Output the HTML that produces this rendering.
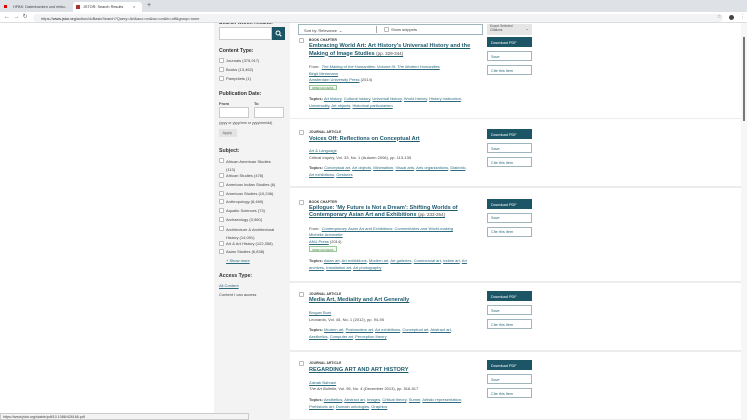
<!DOCTYPE html><html><head><meta charset="utf-8"><style>
*{margin:0;padding:0;box-sizing:border-box}
body{width:747px;height:420px;overflow:hidden;background:#fff;font-family:"Liberation Sans",sans-serif;position:relative;color:#333}
.a{position:absolute;white-space:nowrap}
.z{z-index:10}
.s{font-size:4px;color:#444}
.l{color:#2c6b7f;text-decoration:underline}
.t{font-size:5.6px;font-weight:bold;color:#1d5a6c;text-decoration:underline}
.lab{font-size:3.3px;font-weight:bold;color:#333;letter-spacing:.1px}
.h{font-size:5.2px;font-weight:bold;color:#333}
.cb{position:absolute;width:5px;height:5px;border:0.6px solid #bbb;background:#fff;border-radius:1px}
.btn{position:absolute;width:45px;height:10px;border:0.7px solid #9fb5bd;background:#fff;font-size:3.8px;color:#2c6b7f;padding:2.8px 0 0 3px}
.dl{background:#1c5566;color:#fff;border-color:#1c5566}
.sep{position:absolute;left:290px;width:451px;height:1.5px;background:#ececec}
.oa{position:absolute;height:5.5px;border:0.5px solid #9bc59b;background:#f3faf1;font-size:3px;color:#3c7a3c;padding:0.8px 2px 0}
</style></head><body>
<!-- chrome -->
<div class="a z" style="left:0;top:0;width:747px;height:12px;background:#dee1e6"></div>
<div class="a z" style="left:3px;top:2px;width:69px;height:10px;font-size:3.8px;color:#444;padding:3px 0 0 10px">HFBK: Datenbanken und elek…<span style="position:absolute;left:60px">×</span></div>
<div class="a z" style="left:4px;top:5px;width:3px;height:3px;background:#d00"></div>
<div class="a z" style="left:73px;top:2px;width:69px;height:10px;background:#fff;border-radius:3px 3px 0 0;font-size:3.8px;color:#333;padding:3px 0 0 10px">JSTOR: Search Results<span style="position:absolute;left:60px">×</span></div>
<div class="a z" style="left:76px;top:4.5px;width:4px;height:4px;background:#a33"></div>
<div class="a z" style="left:147px;top:2px;font-size:7px;color:#555">+</div>
<div class="a z" style="left:0;top:12px;width:747px;height:11px;background:#fff;border-bottom:0.5px solid #ddd"></div>
<div class="a z" style="left:4px;top:13px;font-size:6px;color:#666">←&nbsp;&nbsp;→&nbsp;&nbsp;↻</div>
<div class="a z" style="left:33px;top:13.5px;width:690px;height:8px;background:#f1f3f4;border-radius:4px;font-size:3.9px;color:#444;padding:2px 0 0 8px">https://<b style="font-weight:normal;color:#222">www.jstor.org</b>/action/doBasicSearch?Query=Art&amp;acc=on&amp;wc=on&amp;fc=off&amp;group=none</div>
<div class="a z" style="left:717px;top:14px;font-size:5px;color:#666">☆</div>
<div class="a z" style="left:729px;top:15px;width:5px;height:5px;border-radius:50%;background:#444"></div>
<div class="a z" style="left:740px;top:14px;font-size:5px;color:#666">⋮</div>
<!-- scrollbar -->
<div class="a" style="left:741px;top:23px;width:6px;height:397px;background:#f6f6f6"></div>
<div class="a" style="left:743px;top:37px;width:2px;height:84px;background:#777"></div>
<!-- sidebar -->
<div class="a" style="left:214px;top:23px;width:76px;height:397px;background:#f3f3f3"></div>
<div class="a h" style="left:219px;top:20px">Search within results:</div>
<div class="a" style="left:219px;top:27px;width:53px;height:13px;background:#fff;border:0.6px solid #ccc"></div>
<div class="a" style="left:272px;top:27px;width:13px;height:13px;background:#1c5566"></div>
<svg class="a" style="left:275px;top:30px" width="7" height="7" viewBox="0 0 7 7"><circle cx="3" cy="3" r="2" fill="none" stroke="#fff" stroke-width="1"/><path d="M4.4 4.4L6.3 6.3" stroke="#fff" stroke-width="1.1"/></svg>
<div class="a h" style="left:219px;top:48px">Content Type:</div>
<div class="cb" style="left:219px;top:58px"></div><div class="a s" style="left:226px;top:58px">Journals (375,917)</div>
<div class="cb" style="left:219px;top:67px"></div><div class="a s" style="left:226px;top:67px">Books (13,462)</div>
<div class="cb" style="left:219px;top:76px"></div><div class="a s" style="left:226px;top:76px">Pamphlets (1)</div>
<div class="a h" style="left:219px;top:91px">Publication Date:</div>
<div class="a s" style="left:219px;top:101px;font-weight:bold">From</div><div class="a s" style="left:254px;top:101px;font-weight:bold">To</div>
<div class="a" style="left:219px;top:107px;width:30px;height:11px;background:#fff;border:0.6px solid #ccc"></div>
<div class="a" style="left:254px;top:107px;width:30px;height:11px;background:#fff;border:0.6px solid #ccc"></div>
<div class="a s" style="left:219px;top:121px;font-size:3.6px">(yyyy or yyyy/mm or yyyy/mm/dd)</div>
<div class="a" style="left:219px;top:129px;width:18px;height:8px;background:#e3e3e3;font-size:3.8px;color:#666;padding:2px 0 0 3.5px">Apply</div>
<div class="a h" style="left:219px;top:148px">Subject:</div>
<div class="cb" style="left:219px;top:158px"></div><div class="a s" style="left:226px;top:158px;line-height:7.5px">African American Studies<br>(113)</div>
<div class="cb" style="left:219px;top:173px"></div><div class="a s" style="left:226px;top:173px">African Studies (478)</div>
<div class="cb" style="left:219px;top:182px"></div><div class="a s" style="left:226px;top:182px">American Indian Studies (6)</div>
<div class="cb" style="left:219px;top:191px"></div><div class="a s" style="left:226px;top:191px">American Studies (10,246)</div>
<div class="cb" style="left:219px;top:199px"></div><div class="a s" style="left:226px;top:199px">Anthropology (8,469)</div>
<div class="cb" style="left:219px;top:208px"></div><div class="a s" style="left:226px;top:208px">Aquatic Sciences (73)</div>
<div class="cb" style="left:219px;top:217px"></div><div class="a s" style="left:226px;top:217px">Archaeology (3,960)</div>
<div class="cb" style="left:219px;top:226px"></div><div class="a s" style="left:226px;top:226px;line-height:7.5px">Architecture &amp; Architectural<br>History (14,091)</div>
<div class="cb" style="left:219px;top:241px"></div><div class="a s" style="left:226px;top:241px">Art &amp; Art History (122,358)</div>
<div class="cb" style="left:219px;top:249px"></div><div class="a s" style="left:226px;top:249px">Asian Studies (6,838)</div>
<div class="a s l" style="left:226px;top:258px">+ Show more</div>
<div class="a h" style="left:219px;top:273px">Access Type:</div>
<div class="a s l" style="left:219px;top:283px">All Content</div>
<div class="a s" style="left:219px;top:292px">Content I can access</div>
<!-- top bar -->
<div class="a" style="left:298px;top:24px;width:185px;height:11px;border:0.7px solid #9fb5bd;font-size:3.9px;color:#444;padding:3px 0 0 5px">Sort by: Relevance&nbsp;&nbsp;⌄</div>
<div class="a" style="left:376px;top:26px;width:0.6px;height:7px;background:#aaa"></div>
<div class="cb" style="left:384px;top:27px"></div><div class="a s" style="left:391px;top:27px">Show snippets</div>
<div class="a" style="left:487px;top:24px;width:45px;height:11px;background:#e5e5e5;font-size:3.2px;color:#555;padding:1.2px 0 0 3px;line-height:3.8px">Export Selected<br>Citations<span style="position:absolute;right:3px;top:3px;font-size:4px">⌄</span></div>
<!-- result 1 -->
<div class="cb" style="left:299px;top:38px"></div>
<div class="a lab" style="left:309px;top:38px">BOOK CHAPTER</div>
<div class="a t" style="left:309px;top:43px">Embracing World Art: Art History's Universal History and the</div>
<div class="a t" style="left:309px;top:50.5px">Making of Image Studies <span style="font-weight:normal;text-decoration:none;color:#444;font-size:4.5px">(pp. 329-344)</span></div>
<div class="a s" style="left:309px;top:64px">From: &nbsp;<i class="l">The Making of the Humanities: Volume III: The Modern Humanities</i></div>
<div class="a s l" style="left:309px;top:70.5px">Birgit Mersmann</div>
<div class="a s" style="left:309px;top:77px"><span class="l">Amsterdam University Press</span> (2014)</div>
<div class="oa" style="left:309px;top:84.5px">OPEN ACCESS</div>
<div class="a s" style="left:309px;top:96px;line-height:6.5px"><b>Topics:</b> <span class="l">Art history</span>, <span class="l">Cultural history</span>, <span class="l">Universal history</span>, <span class="l">World history</span>, <span class="l">History instruction</span>,<br><span class="l">Universality</span>, <span class="l">Art objects</span>, <span class="l">Historical particularism</span></div>
<div class="btn dl" style="left:487px;top:37px">Download PDF</div>
<div class="btn" style="left:487px;top:51px">Save</div>
<div class="btn" style="left:487px;top:65px">Cite this Item</div>
<div class="sep" style="top:117.5px"></div>
<!-- result 2 -->
<div class="cb" style="left:299px;top:130px"></div>
<div class="a lab" style="left:309px;top:130px">JOURNAL ARTICLE</div>
<div class="a t" style="left:309px;top:135.5px">Voices Off: Reflections on Conceptual Art</div>
<div class="a s l" style="left:309px;top:148px">Art &amp; Language</div>
<div class="a s" style="left:309px;top:154.5px">Critical Inquiry, Vol. 33, No. 1 (Autumn 2006), pp. 113-135</div>
<div class="a s" style="left:309px;top:165px;line-height:6.5px"><b>Topics:</b> <span class="l">Conceptual art</span>, <span class="l">Art objects</span>, <span class="l">Minimalism</span>, <span class="l">Visual arts</span>, <span class="l">Arts organizations</span>, <span class="l">Dialectic</span>,<br><span class="l">Art exhibitions</span>, <span class="l">Gestures</span></div>
<div class="btn dl" style="left:487px;top:129px">Download PDF</div>
<div class="btn" style="left:487px;top:143px">Save</div>
<div class="btn" style="left:487px;top:157px">Cite this Item</div>
<div class="sep" style="top:186px"></div>
<!-- result 3 -->
<div class="cb" style="left:299px;top:200px"></div>
<div class="a lab" style="left:309px;top:200px">BOOK CHAPTER</div>
<div class="a t" style="left:309px;top:205px">Epilogue: 'My Future is Not a Dream': Shifting Worlds of</div>
<div class="a t" style="left:309px;top:212px">Contemporary Asian Art and Exhibitions <span style="font-weight:normal;text-decoration:none;color:#444;font-size:4.5px">(pp. 233-254)</span></div>
<div class="a s" style="left:309px;top:225.5px">From: &nbsp;<i class="l">Contemporary Asian Art and Exhibitions: Connectivities and World-making</i></div>
<div class="a s l" style="left:309px;top:232px">Michelle Antoinette</div>
<div class="a s" style="left:309px;top:238.5px"><span class="l">ANU Press</span> (2014)</div>
<div class="oa" style="left:309px;top:246px">OPEN ACCESS</div>
<div class="a s" style="left:309px;top:258px;line-height:6.5px"><b>Topics:</b> <span class="l">Asian art</span>, <span class="l">Art exhibitions</span>, <span class="l">Modern art</span>, <span class="l">Art galleries</span>, <span class="l">Commercial art</span>, <span class="l">Indian art</span>, <span class="l">Art</span><br><span class="l">archives</span>, <span class="l">Installation art</span>, <span class="l">Art photography</span></div>
<div class="btn dl" style="left:487px;top:199px">Download PDF</div>
<div class="btn" style="left:487px;top:212.5px">Save</div>
<div class="btn" style="left:487px;top:226.5px">Cite this Item</div>
<div class="sep" style="top:281px"></div>
<!-- result 4 -->
<div class="cb" style="left:299px;top:292px"></div>
<div class="a lab" style="left:309px;top:292px">JOURNAL ARTICLE</div>
<div class="a t" style="left:309px;top:297px">Media Art, Mediality and Art Generally</div>
<div class="a s l" style="left:309px;top:310px">Brogan Bunt</div>
<div class="a s" style="left:309px;top:316.5px">Leonardo, Vol. 45, No. 1 (2012), pp. 94-95</div>
<div class="a s" style="left:309px;top:327px;line-height:6.5px"><b>Topics:</b> <span class="l">Modern art</span>, <span class="l">Postmodern art</span>, <span class="l">Art exhibitions</span>, <span class="l">Conceptual art</span>, <span class="l">Abstract art</span>,<br><span class="l">Aesthetics</span>, <span class="l">Computer art</span>, <span class="l">Perception theory</span></div>
<div class="btn dl" style="left:487px;top:291px">Download PDF</div>
<div class="btn" style="left:487px;top:305px">Save</div>
<div class="btn" style="left:487px;top:319px">Cite this Item</div>
<div class="sep" style="top:350px"></div>
<!-- result 5 -->
<div class="cb" style="left:299px;top:361px"></div>
<div class="a lab" style="left:309px;top:361px">JOURNAL ARTICLE</div>
<div class="a t" style="left:309px;top:366.5px">REGARDING ART AND ART HISTORY</div>
<div class="a s l" style="left:309px;top:379.5px">Zainab Bahrani</div>
<div class="a s" style="left:309px;top:386px"><i>The Art Bulletin</i>, Vol. 95, No. 4 (December 2013), pp. 516-517</div>
<div class="a s" style="left:309px;top:397px;line-height:6.5px"><b>Topics:</b> <span class="l">Aesthetics</span>, <span class="l">Abstract art</span>, <span class="l">Images</span>, <span class="l">Critical theory</span>, <span class="l">Sumer</span>, <span class="l">Artistic representation</span>,<br><span class="l">Prehistoric art</span>, <span class="l">Domain ontologies</span>, <span class="l">Graphics</span></div>
<div class="btn dl" style="left:487px;top:360px">Download PDF</div>
<div class="btn" style="left:487px;top:374px">Save</div>
<div class="btn" style="left:487px;top:388px">Cite this Item</div>
<div class="sep" style="top:418.5px"></div>
<!-- status -->
<div class="a z" style="left:0;top:413px;width:249px;height:7px;background:#f1f3f4;border:0.5px solid #ccc;font-size:3.6px;color:#444;padding:1.3px 0 0 2px">https://www.jstor.org/stable/pdf/10.1086/426166.pdf</div>
</body></html>
